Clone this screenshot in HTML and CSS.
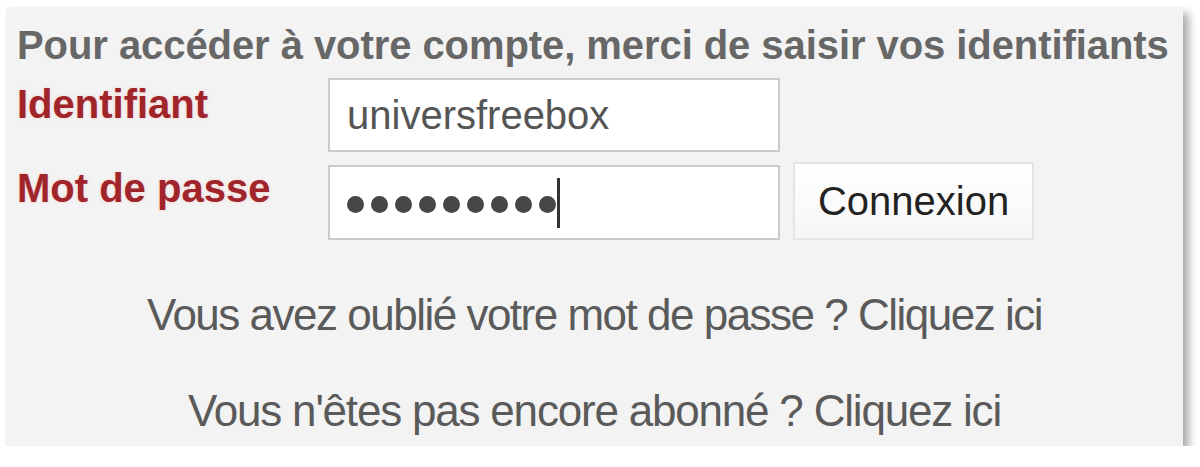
FILE: index.html
```html
<!DOCTYPE html>
<html lang="fr">
<head>
<meta charset="utf-8">
<title>Connexion</title>
<link rel="stylesheet" href="styles.css">
</head>
<body>
<div class="panel">
  <p class="intro">Pour accéder à votre compte, merci de saisir vos identifiants</p>
  <div class="form">
    <span class="label">Identifiant</span>
    <div class="field"><span class="value">universfreebox</span></div>
    <span class="spacer"></span>
    <span class="label">Mot de passe</span>
    <div class="field field-pass">
      <span class="dot"></span><span class="dot"></span><span class="dot"></span>
      <span class="dot"></span><span class="dot"></span><span class="dot"></span>
      <span class="dot"></span><span class="dot"></span><span class="dot"></span>
      <span class="caret"></span>
    </div>
    <div class="button">Connexion</div>
  </div>
  <p class="link link-first">Vous avez oublié votre mot de passe ? Cliquez ici</p>
  <p class="link link-second">Vous n'êtes pas encore abonné ? Cliquez ici</p>
</div>
</body>
</html>
```

FILE: styles.css
```css
html, body {
  margin: 0;
  padding: 0;
  background: #ffffff;
}

body {
  font-family: "Liberation Sans", Arial, sans-serif;
}

.panel {
  box-sizing: border-box;
  width: 1177px;
  height: 439px;
  margin: 7px 0 0 6px;
  padding: 15px 0 0 11px;
  background: #f3f3f3;
  box-shadow: 6px 6px 8px rgba(0, 0, 0, 0.32);
  display: flex;
  flex-direction: column;
}

.intro {
  margin: 0;
  font-size: 40px;
  line-height: 46px;
  font-weight: bold;
  color: #676767;
  letter-spacing: -0.07px;
  white-space: nowrap;
}

.form {
  margin-top: 10px;
  display: grid;
  grid-template-columns: 298px 452px 241px;
  grid-template-rows: 74px 78px;
  column-gap: 13px;
  row-gap: 10px;
  align-items: end;
}

.label {
  align-self: start;
  margin-top: 3px;
  font-size: 40px;
  line-height: 46px;
  font-weight: bold;
  color: #a0252b;
  text-shadow: 0 0 3px rgba(255, 120, 120, 0.35);
}

.field {
  box-sizing: border-box;
  height: 74px;
  border: 2px solid #cbcbcb;
  background: #ffffff;
  display: flex;
  align-items: center;
  padding-left: 17px;
}

.field-pass {
  height: 75px;
  gap: 7px;
}

.value {
  font-size: 40px;
  line-height: 46px;
  color: #555555;
}

.dot {
  width: 17px;
  height: 17px;
  border-radius: 50%;
  background: #474747;
  margin-top: 4px;
}

.caret {
  width: 3px;
  height: 50px;
  background: #333333;
  margin-left: -6px;
}

.button {
  box-sizing: border-box;
  height: 78px;
  border: 2px solid #e4e4e4;
  background: linear-gradient(#ffffff, #f6f6f6);
  display: flex;
  align-items: center;
  justify-content: center;
  font-size: 40px;
  line-height: 46px;
  color: #222222;
}

.link {
  margin: 0;
  margin-left: -11px;
  text-align: center;
  font-size: 44px;
  line-height: 50px;
  color: #5a5a5a;
  white-space: nowrap;
}

.link-first {
  margin-top: 50px;
  letter-spacing: -1.5px;
}

.link-second {
  margin-top: 46px;
  letter-spacing: -1.2px;
}
```
